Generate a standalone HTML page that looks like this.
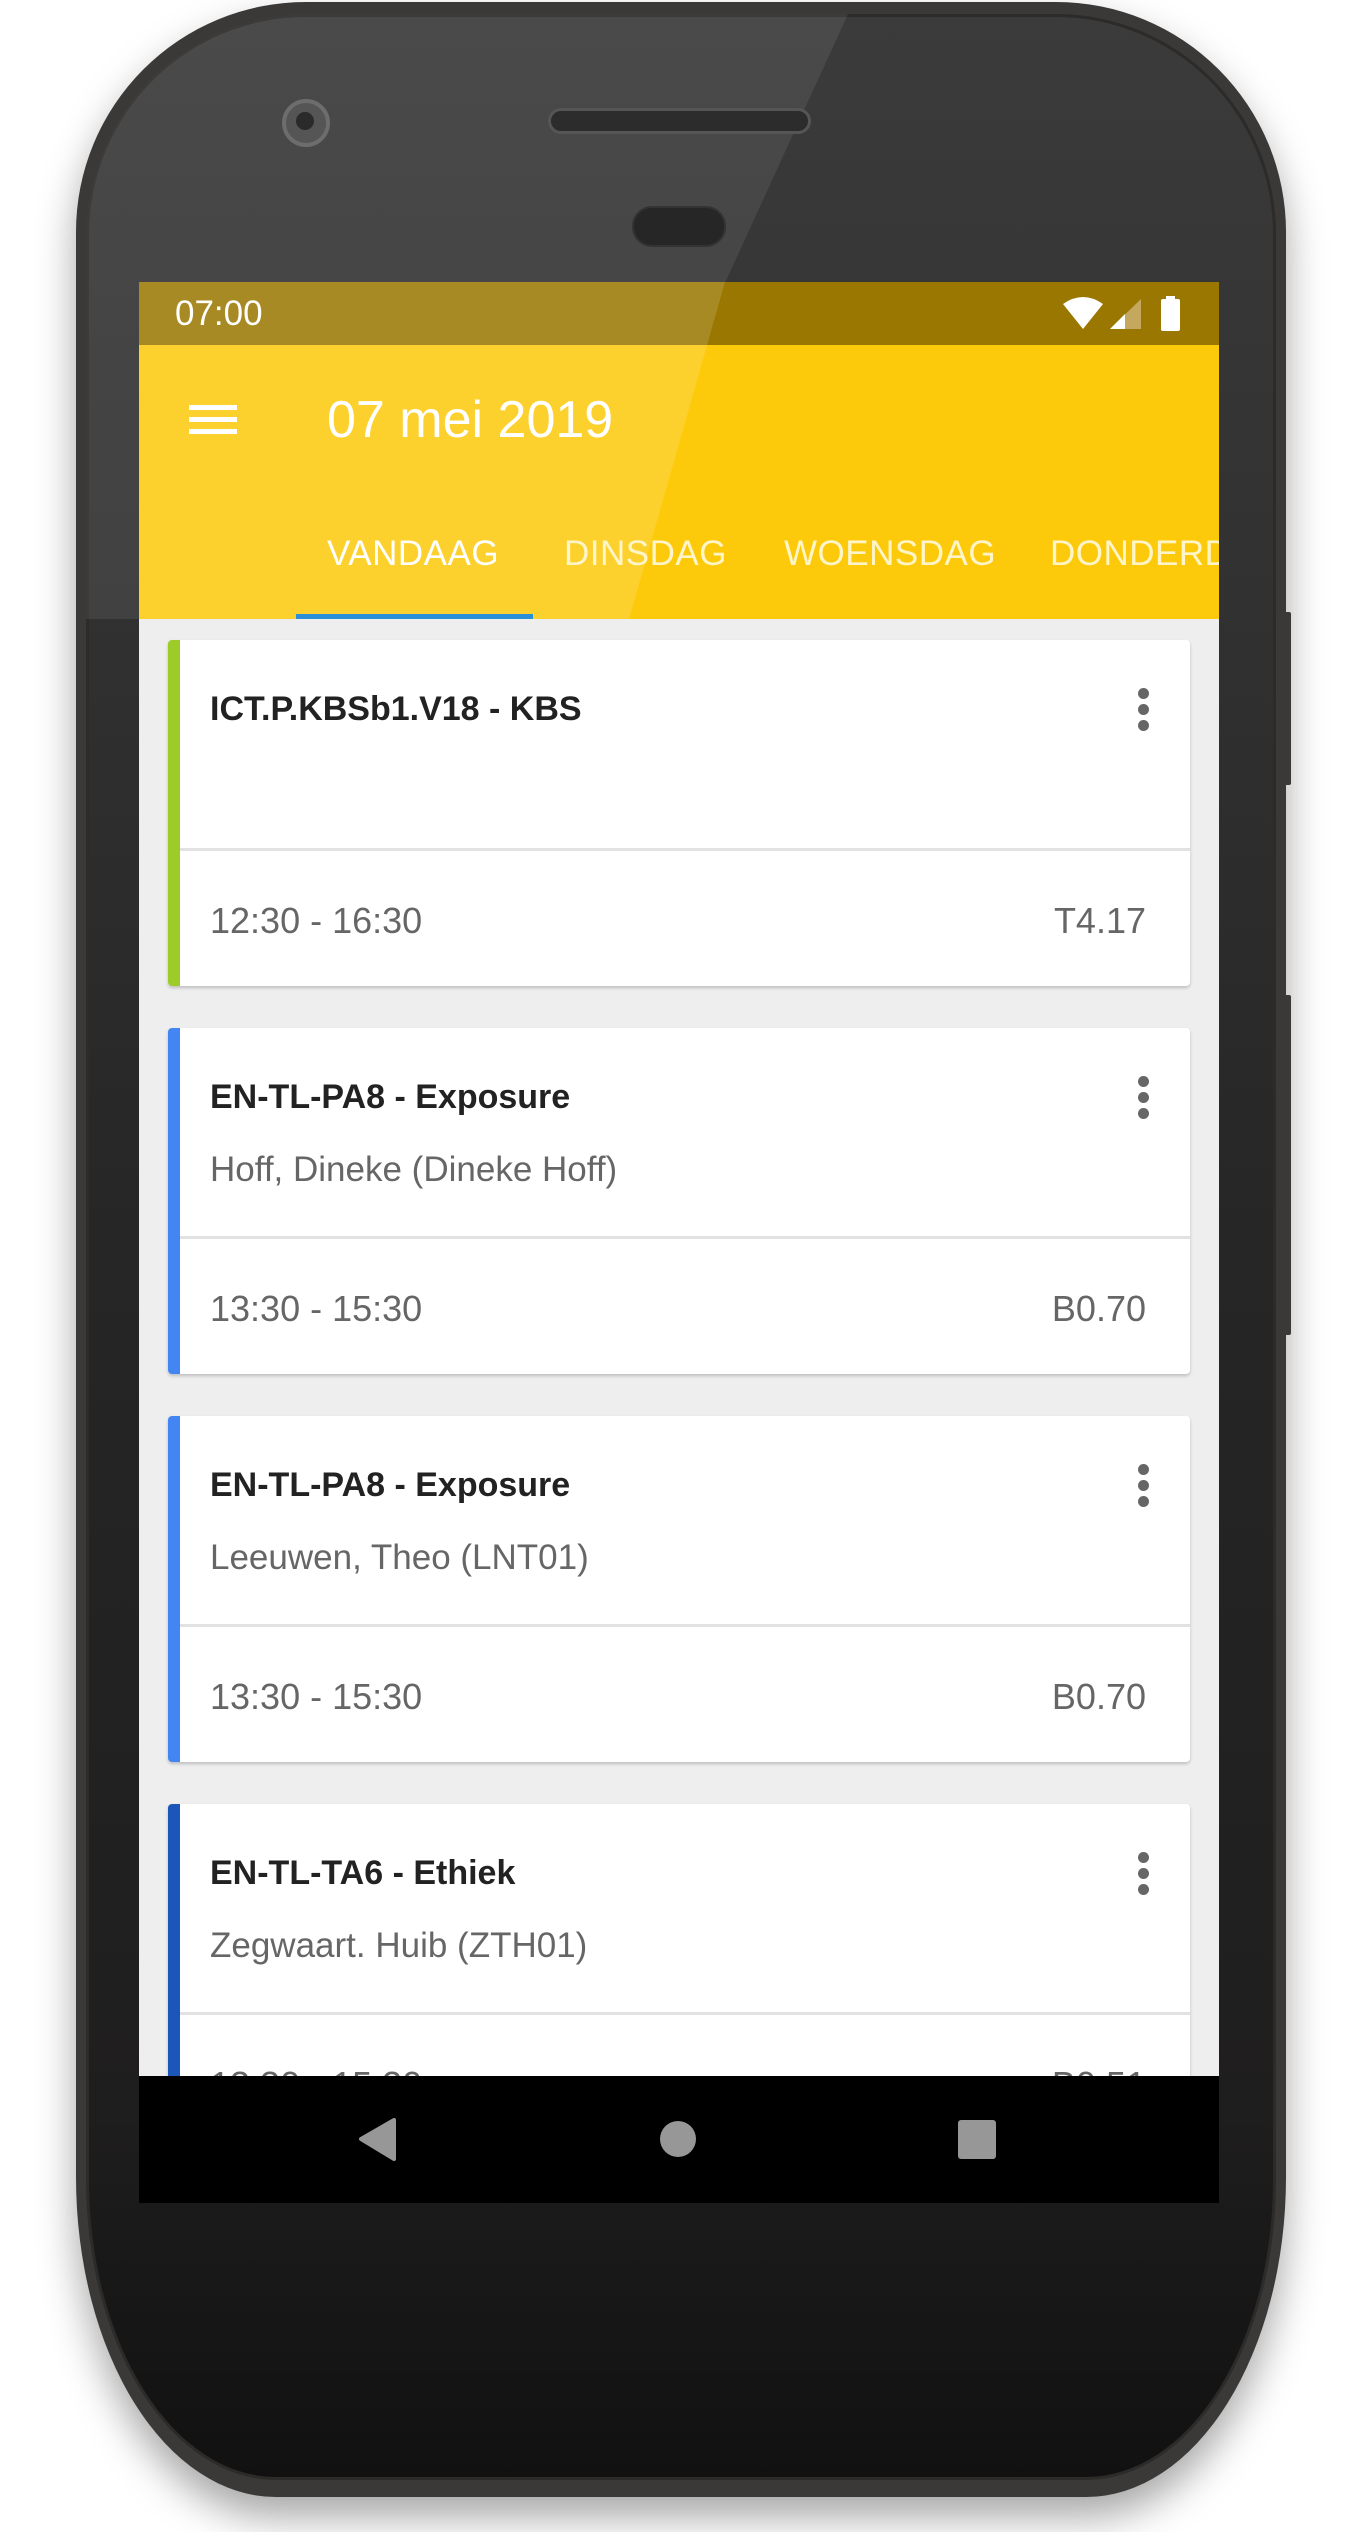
<!DOCTYPE html>
<html><head><meta charset="utf-8"><style>
*{margin:0;padding:0;box-sizing:border-box}
body{width:1370px;height:2532px;background:#fff;position:relative;overflow:hidden;font-family:"Liberation Sans",sans-serif}
.abs{position:absolute}
.phone{left:76px;top:2px;width:1210px;height:2495px;border-radius:230px 230px 200px 200px / 230px 230px 320px 320px;background:#3a3937;box-shadow:0 20px 40px rgba(0,0,0,.35);}
.inner{left:86px;top:14px;width:1190px;height:2466px;border-radius:220px 220px 190px 190px / 220px 220px 300px 300px;background:linear-gradient(#3b3b3b,#262626 50%,#1f1e1e 85%,#111);border:3px solid #2c2b29}
.glare{left:86px;top:14px;width:1190px;height:2466px;border-radius:220px;overflow:hidden}
.screen{left:139px;top:282px;width:1080px;height:1921px;overflow:hidden;background:#eeeeee}
.status{left:0;top:0;width:1080px;height:63px;background:#9a7700}
.bar{left:0;top:63px;width:1080px;height:274px;background:#fdca0b}
.card{left:29px;width:1022px;height:346px;background:#fff;border-radius:4px;box-shadow:0 2px 3px rgba(0,0,0,.2);overflow:hidden}
.card .l{left:0;top:0;width:12px;height:100%}
.card .t{left:42px;top:50px;font-size:34px;font-weight:bold;color:#222}
.card .s{left:42px;top:122px;font-size:35px;color:#666}
.card .d{left:12px;top:208px;right:0;height:3px;background:#e2e2e2}
.card .tm{left:42px;top:260px;font-size:36px;color:#666}
.card .r{right:44px;top:260px;font-size:36px;color:#666}
.dots{right:40px;top:48px;width:12px}
.dots i{display:block;width:11px;height:11px;border-radius:50%;background:#666;margin-bottom:5px}
.tab{top:252px;font-size:35px;color:#fff5c8;letter-spacing:.5px}
</style></head><body>
<div class="abs phone"></div>
<div class="abs inner"></div>
<div class="abs" style="left:1283px;top:612px;width:8px;height:173px;background:#3a3937;border-radius:2px"></div>
<div class="abs" style="left:1283px;top:995px;width:8px;height:340px;background:#3a3937;border-radius:2px"></div>
<div class="abs glare"><div class="abs" style="left:0;top:0;width:1190px;height:700px;background:rgba(255,255,255,.08);clip-path:polygon(0 0,762px 0,639px 269px,543px 605px,0 605px)"></div></div>
<div class="abs" style="left:282px;top:99px;width:48px;height:48px;border-radius:50%;background:#555;border:4px solid #6d6d6d"></div>
<div class="abs" style="left:296px;top:112px;width:18px;height:18px;border-radius:50%;background:#2a2a2a"></div>
<div class="abs" style="left:548px;top:108px;width:263px;height:26px;border-radius:13px;background:#2c2c2c;border:3px solid #555"></div>
<div class="abs" style="left:632px;top:206px;width:94px;height:41px;border-radius:20px;background:#262626;border:2px solid #333"></div>
<div class="abs screen">
 <div class="abs status"></div>
 <div class="abs bar"></div>
 <div class="abs" style="left:0;top:0;width:1080px;height:337px;background:rgba(255,255,255,.14);clip-path:polygon(0 0,586px 0,490px 337px,0 337px)"></div>
 <div class="abs" style="left:36px;top:12px;font-size:35px;color:#fff">07:00</div>
 <svg class="abs" style="left:920px;top:14px" width="125" height="38" viewBox="0 0 125 38">
  <path d="M4 8 Q24 -6 44 8 L24 33 Z" fill="#fff"/>
  <path d="M51 33 L82 3 L82 33 Z" fill="#c4a860"/><path d="M51 33 L66 18 L66 33 Z" fill="#fff"/>
  <rect x="102" y="3" width="19" height="32" rx="2" fill="#fff"/><rect x="107" y="0" width="9" height="4" fill="#fff"/>
 </svg>
 <div class="abs" style="left:50px;top:123px;width:48px;height:5px;background:#fff"></div>
 <div class="abs" style="left:50px;top:135px;width:48px;height:5px;background:#fff"></div>
 <div class="abs" style="left:50px;top:147px;width:48px;height:5px;background:#fff"></div>
 <div class="abs" style="left:188px;top:108px;font-size:52px;color:#fff">07 mei 2019</div>
 <div class="abs tab" style="left:188px;color:#fff">VANDAAG</div>
 <div class="abs tab" style="left:425px">DINSDAG</div>
 <div class="abs tab" style="left:645px">WOENSDAG</div>
 <div class="abs tab" style="left:911px">DONDERD</div>
 <div class="abs" style="left:157px;top:332px;width:237px;height:5px;background:#2a8fd6"></div>

 <div class="abs card" style="top:358px"><div class="abs l" style="background:#9dcc2a"></div><div class="abs t">ICT.P.KBSb1.V18 - KBS</div><div class="abs dots"><i></i><i></i><i></i></div><div class="abs d"></div><div class="abs tm">12:30 - 16:30</div><div class="abs r">T4.17</div></div>
 <div class="abs card" style="top:746px"><div class="abs l" style="background:#4385f3"></div><div class="abs t">EN-TL-PA8 - Exposure</div><div class="abs s">Hoff, Dineke (Dineke Hoff)</div><div class="abs dots"><i></i><i></i><i></i></div><div class="abs d"></div><div class="abs tm">13:30 - 15:30</div><div class="abs r">B0.70</div></div>
 <div class="abs card" style="top:1134px"><div class="abs l" style="background:#4385f3"></div><div class="abs t">EN-TL-PA8 - Exposure</div><div class="abs s">Leeuwen, Theo (LNT01)</div><div class="abs dots"><i></i><i></i><i></i></div><div class="abs d"></div><div class="abs tm">13:30 - 15:30</div><div class="abs r">B0.70</div></div>
 <div class="abs card" style="top:1522px"><div class="abs l" style="background:#1d56b9"></div><div class="abs t">EN-TL-TA6 - Ethiek</div><div class="abs s">Zegwaart. Huib (ZTH01)</div><div class="abs dots"><i></i><i></i><i></i></div><div class="abs d"></div><div class="abs tm">13:30 - 15:30</div><div class="abs r">B0.51</div></div>

 <div class="abs" style="left:0;top:1794px;width:1080px;height:127px;background:#000"></div>
 <svg class="abs" style="left:0;top:1794px" width="1080" height="127">
  <path d="M222 63 L255 44 L255 83 Z" fill="#979797" stroke="#979797" stroke-width="4" stroke-linejoin="round"/>
  <ellipse cx="539" cy="63" rx="18" ry="18" fill="#979797"/>
  <rect x="819" y="44" width="38" height="39" rx="3" fill="#979797"/>
 </svg>
</div>
</body></html>
